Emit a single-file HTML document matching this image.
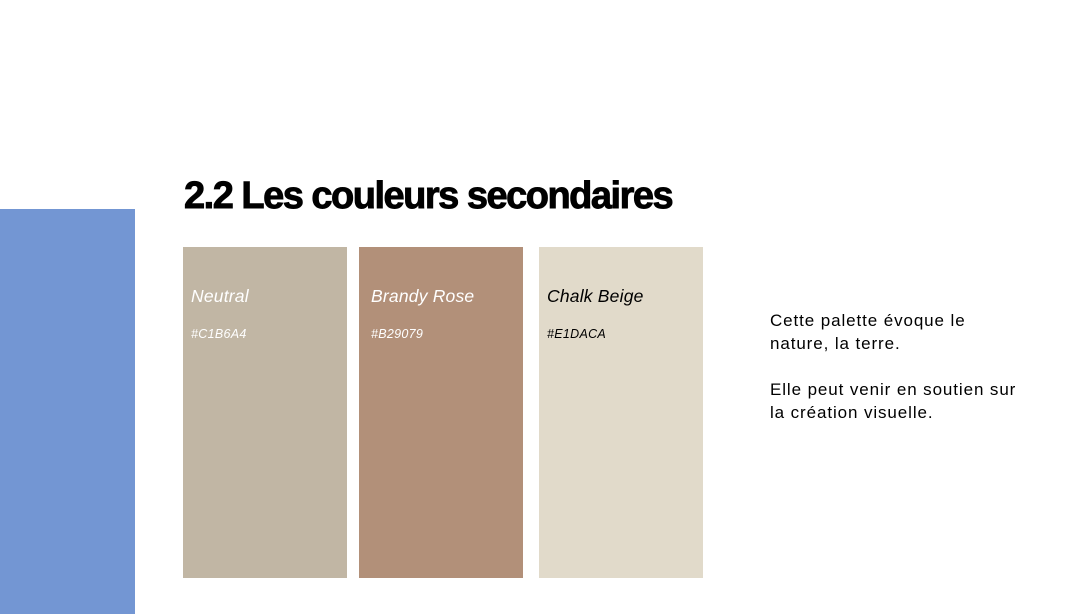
<!DOCTYPE html>
<html><head><meta charset="utf-8"><style>
body{margin:0;width:1090px;height:614px;background:#fff;position:relative;overflow:hidden;font-family:"Liberation Sans",sans-serif}
.blue{position:absolute;left:0;top:209px;width:135px;height:405px;background:#7396D3}
h1{position:absolute;left:184px;top:175px;margin:0;font-size:38px;font-weight:900;letter-spacing:-1.5px;color:#000;white-space:nowrap;-webkit-text-stroke:0.9px #000}
.sw{position:absolute;top:247px;width:164px;height:331px}
.sw .n{position:absolute;left:8px;top:39px;font-size:17.5px;font-style:italic;letter-spacing:0.2px}
.sw .c{position:absolute;left:8px;top:80px;font-size:12.5px;font-style:italic;letter-spacing:0.3px}
.txt{position:absolute;left:770px;top:309px;font-size:17px;line-height:23px;color:#000;letter-spacing:0.9px}
</style></head><body>
<div class="blue"></div>
<h1>2.2 Les couleurs secondaires</h1>
<div class="sw" style="left:183px;background:#C1B6A4;color:#fff"><div class="n">Neutral</div><div class="c">#C1B6A4</div></div>
<div class="sw" style="left:359px;background:#B29079;color:#fff"><div class="n" style="left:12px">Brandy Rose</div><div class="c" style="left:12px">#B29079</div></div>
<div class="sw" style="left:539px;background:#E1DACA;color:#000"><div class="n">Chalk Beige</div><div class="c">#E1DACA</div></div>
<div class="txt">Cette palette évoque le<br>nature, la terre.<br><br>Elle peut venir en soutien sur<br>la création visuelle.</div>
</body></html>
